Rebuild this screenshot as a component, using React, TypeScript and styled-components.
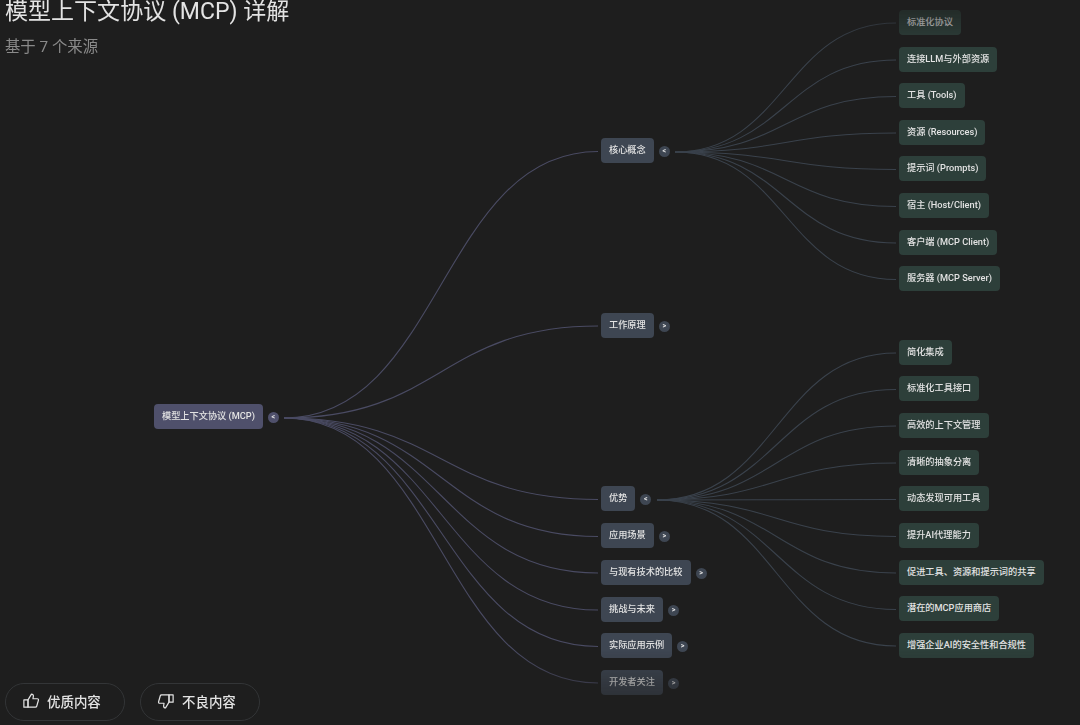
import React from 'react';
import styled, { createGlobalStyle } from 'styled-components';

const GlobalStyle = createGlobalStyle`
  html, body {
    margin: 0;
    padding: 0;
    height: 100%;
    background: #1e1e1e;
    overflow: hidden;
  }
  #root {
    height: 100%;
  }
`;

const FONT = `'Roboto', 'Noto Sans CJK SC', sans-serif`;

const Page = styled.div`
  position: relative;
  height: 725px;
  display: flex;
  flex-direction: column;
  justify-content: space-between;
  padding: 0 0 4px 5px;
  box-sizing: border-box;
  background: #1e1e1e;
  font-family: ${FONT};
  overflow: hidden;
`;

const Header = styled.header`
  position: relative;
  z-index: 1;
`;

const Title = styled.h1`
  margin: 0;
  font-size: 23.04px;
  line-height: 24px;
  font-weight: 400;
  color: #e3e3e3;
`;

const Subtitle = styled.div`
  margin-top: 13px;
  font-size: 15.36px;
  line-height: 20px;
  color: #8a8a8a;
`;

const Footer = styled.footer`
  position: relative;
  z-index: 1;
  display: flex;
  gap: 15px;
`;

const FeedbackButton = styled.button`
  display: flex;
  align-items: center;
  gap: 7px;
  width: 120px;
  height: 38px;
  padding: 0 0 2px 16px;
  background: transparent;
  border: 1px solid #333537;
  border-radius: 19px;
  color: #e3e3e3;
  font-family: ${FONT};
  font-size: 13.44px;
  font-weight: 500;
`;

const Canvas = styled.div`
  position: absolute;
  inset: 0;
  -webkit-mask-image: linear-gradient(to bottom, rgba(0, 0, 0, 0.25) 0, #000 46px, #000 650px, rgba(0, 0, 0, 0.45) 700px);
  mask-image: linear-gradient(to bottom, rgba(0, 0, 0, 0.25) 0, #000 46px, #000 650px, rgba(0, 0, 0, 0.45) 700px);
`;

const Links = styled.svg`
  position: absolute;
  inset: 0;
`;

const Item = styled.div<{ $x: number; $y: number }>`
  position: absolute;
  left: ${p => p.$x}px;
  top: ${p => p.$y - 12.5}px;
  height: 25px;
  display: flex;
  align-items: center;
  gap: 5px;
`;

const LEVEL_COLORS = ['#4f506b', '#3e4652', '#2d3f3a'];

const NodeBox = styled.div<{ $level: number }>`
  height: 25px;
  line-height: 24px;
  padding: 0 8px;
  border-radius: 4px;
  font-size: 9.2px;
  font-weight: 500;
  white-space: nowrap;
  color: #e3e3e3;
  background: ${p => LEVEL_COLORS[p.$level]};
`;

const Toggle = styled.div<{ $level: number }>`
  width: 11px;
  height: 11px;
  margin-top: 2px;
  border-radius: 50%;
  display: flex;
  align-items: center;
  justify-content: center;
  font-size: 7px;
  line-height: 11px;
  font-weight: 700;
  color: #e3e3e3;
  background: ${p => LEVEL_COLORS[p.$level]};
`;

type MapNode = { label: string; y: number; toggle: '<' | '>' };

const BRANCHES: MapNode[] = [
  { label: '核心概念', y: 150.5, toggle: '<' },
  { label: '工作原理', y: 325, toggle: '>' },
  { label: '优势', y: 498.5, toggle: '<' },
  { label: '应用场景', y: 535.5, toggle: '>' },
  { label: '与现有技术的比较', y: 572, toggle: '>' },
  { label: '挑战与未来', y: 609, toggle: '>' },
  { label: '实际应用示例', y: 645.5, toggle: '>' },
  { label: '开发者关注', y: 682, toggle: '>' },
];

const CORE_LEAVES = [
  { label: '标准化协议', y: 22 },
  { label: '连接LLM与外部资源', y: 59 },
  { label: '工具 (Tools)', y: 95.5 },
  { label: '资源 (Resources)', y: 132 },
  { label: '提示词 (Prompts)', y: 168.5 },
  { label: '宿主 (Host/Client)', y: 205.5 },
  { label: '客户端 (MCP Client)', y: 242 },
  { label: '服务器 (MCP Server)', y: 278.5 },
];

const ADVANTAGE_LEAVES = [
  { label: '简化集成', y: 352 },
  { label: '标准化工具接口', y: 388.5 },
  { label: '高效的上下文管理', y: 425 },
  { label: '清晰的抽象分离', y: 462 },
  { label: '动态发现可用工具', y: 498.5 },
  { label: '提升AI代理能力', y: 535.5 },
  { label: '促进工具、资源和提示词的共享', y: 572 },
  { label: '潜在的MCP应用商店', y: 608.5 },
  { label: '增强企业AI的安全性和合规性', y: 645 },
];

const curve = (x0: number, y0: number, x1: number, y1: number) => {
  const mid = (x0 + x1) / 2;
  return `M${x0} ${y0}C${mid} ${y0} ${mid} ${y1} ${x1} ${y1}`;
};

const ThumbUp = () => (
  <svg width="18" height="18" viewBox="0 0 24 24" fill="none" stroke="#e3e3e3" strokeWidth="1.6" strokeLinejoin="round">
    <path d="M8 10.500 12.600 2.800c1.600 0 2.600 1.100 2.600 2.600L14.600 9H20.500c1 0 1.700 1 1.400 2l-2.300 8c-.2.700-.8 1.200-1.600 1.200H8z" />
    <path d="M2.500 10.500H8V20.200H2.500z" />
  </svg>
);

const ThumbDown = () => (
  <svg width="18" height="18" viewBox="0 0 24 24" fill="none" stroke="#e3e3e3" strokeWidth="1.6" strokeLinejoin="round">
    <path d="M16 13.500 11.400 21.200c-1.600 0-2.600-1.100-2.600-2.600L9.400 15H3.500c-1 0-1.700-1-1.400-2l2.300-8c.2-.7.8-1.200 1.600-1.200H16z" />
    <path d="M21.500 13.500H16V3.800H21.500z" />
  </svg>
);

const App: React.FC = () => {
  const coreY = 152;
  const advantageY = 500;

  return (
    <Page>
      <GlobalStyle />
      <Canvas>
        <Links width="1080" height="725" fill="none" strokeWidth="1.1">
          {BRANCHES.map(b => (
            <path key={b.label} d={curve(284, 418, 598, b.y + 1)} stroke="#4a4b63" />
          ))}
          {CORE_LEAVES.map(l => (
            <path key={l.label} d={curve(675, coreY, 896, l.y + 1)} stroke="#3a424c" />
          ))}
          {ADVANTAGE_LEAVES.map(l => (
            <path key={l.label} d={curve(657, advantageY, 896, l.y + 1)} stroke="#3a424c" />
          ))}
        </Links>
        <Item $x={154} $y={416.5}>
          <NodeBox $level={0}>模型上下文协议 (MCP)</NodeBox>
          <Toggle $level={0}>&lt;</Toggle>
        </Item>
        {BRANCHES.map(b => (
          <Item key={b.label} $x={601} $y={b.y}>
            <NodeBox $level={1}>{b.label}</NodeBox>
            <Toggle $level={1}>{b.toggle}</Toggle>
          </Item>
        ))}
        {[...CORE_LEAVES, ...ADVANTAGE_LEAVES].map(l => (
          <Item key={l.label} $x={899} $y={l.y}>
            <NodeBox $level={2}>{l.label}</NodeBox>
          </Item>
        ))}
      </Canvas>
      <Header>
        <Title>模型上下文协议 (MCP) 详解</Title>
        <Subtitle>基于 7 个来源</Subtitle>
      </Header>
      <Footer>
        <FeedbackButton><ThumbUp />优质内容</FeedbackButton>
        <FeedbackButton><ThumbDown />不良内容</FeedbackButton>
      </Footer>
    </Page>
  );
};

export default App;
